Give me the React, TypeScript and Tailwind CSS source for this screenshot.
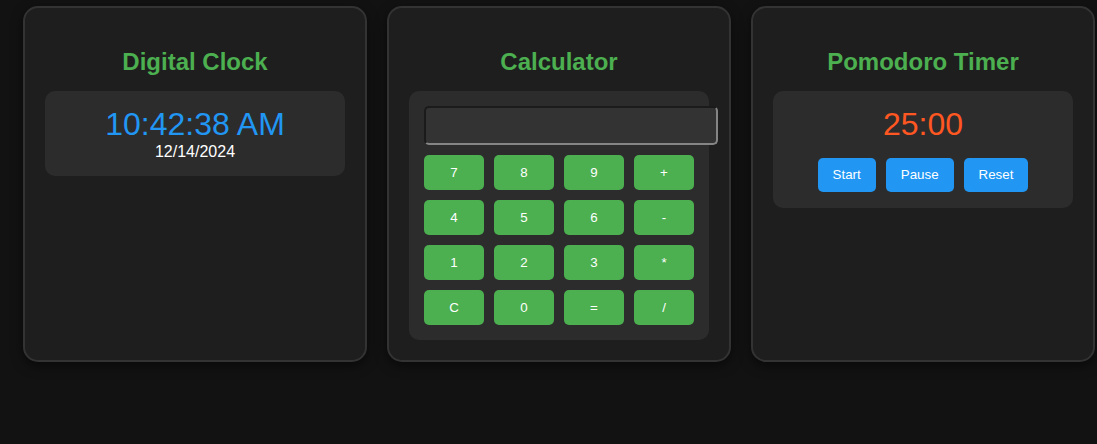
import { useState } from "react";

const keys = ["7", "8", "9", "+", "4", "5", "6", "-", "1", "2", "3", "*", "C", "0", "=", "/"];

function Card({ title, children }: { title: string; children: React.ReactNode }) {
    return (
        <div className="w-[344px] shrink-0 bg-[#1e1e1e] border-2 border-[#333] rounded-[15px] px-[20px] pt-[20px] pb-[20px] shadow-[0_4px_12px_rgba(0,0,0,0.5)]">
            <h2 className="text-[24px] leading-[28px] font-bold text-[#4caf50] text-center mt-[20px] mb-[15px]">{title}</h2>
            {children}
        </div>
    );
}

export default function App() {
    const [display, setDisplay] = useState("");

    const press = (k: string) => {
        if (k === "C") return setDisplay("");
        if (k === "=") {
            try {
                // eslint-disable-next-line no-new-func
                setDisplay(String(Function(`return (${display})`)()));
            } catch {
                setDisplay("Error");
            }
            return;
        }
        setDisplay(prev => prev + k);
    };

    return (
        <div className="min-h-[444px] bg-[#121212] font-['Liberation_Sans',Arial,sans-serif] text-white">
            <div className="flex items-stretch gap-[20px] pl-[23px] pt-[6px]">
                {/* Digital Clock */}
                <Card title="Digital Clock">
                    <div className="bg-[#2c2c2c] rounded-[10px] py-[15px] text-center">
                        <div className="text-[32px] leading-[36.8px] text-[#2196f3]">10:42:38 AM</div>
                        <div className="text-[16px] leading-[18.4px]">12/14/2024</div>
                    </div>
                </Card>

                {/* Calculator */}
                <Card title="Calculator">
                    <div className="bg-[#2c2c2c] rounded-[10px] p-[15px]">
                        <input
                            value={display}
                            readOnly
                            className="block w-[294px] h-[39px] bg-[#333] text-white text-[13.33px] px-[10px] rounded-[5px] border-2 border-t-[#1b1b1b] border-l-[#1b1b1b] border-b-[#858585] border-r-[#858585] outline-none"
                        />
                        <div className="grid grid-cols-4 gap-[10px] mt-[10px]">
                            {keys.map(k => (
                                <button
                                    key={k}
                                    onClick={() => press(k)}
                                    className="h-[35px] bg-[#4caf50] rounded-[5px] text-[13.33px] text-white"
                                >
                                    {k}
                                </button>
                            ))}
                        </div>
                    </div>
                </Card>

                {/* Pomodoro Timer */}
                <Card title="Pomodoro Timer">
                    <div className="bg-[#2c2c2c] rounded-[10px] pt-[15px] pb-[16px] text-center">
                        <div className="text-[32px] leading-[36.8px] text-[#ff5722]">25:00</div>
                        <div className="flex justify-center gap-[10px] mt-[15px]">
                            {["Start", "Pause", "Reset"].map(b => (
                                <button key={b} className="h-[34px] px-[15px] bg-[#2196f3] rounded-[5px] text-[13.33px] text-white">
                                    {b}
                                </button>
                            ))}
                        </div>
                    </div>
                </Card>
            </div>
        </div>
    );
}
